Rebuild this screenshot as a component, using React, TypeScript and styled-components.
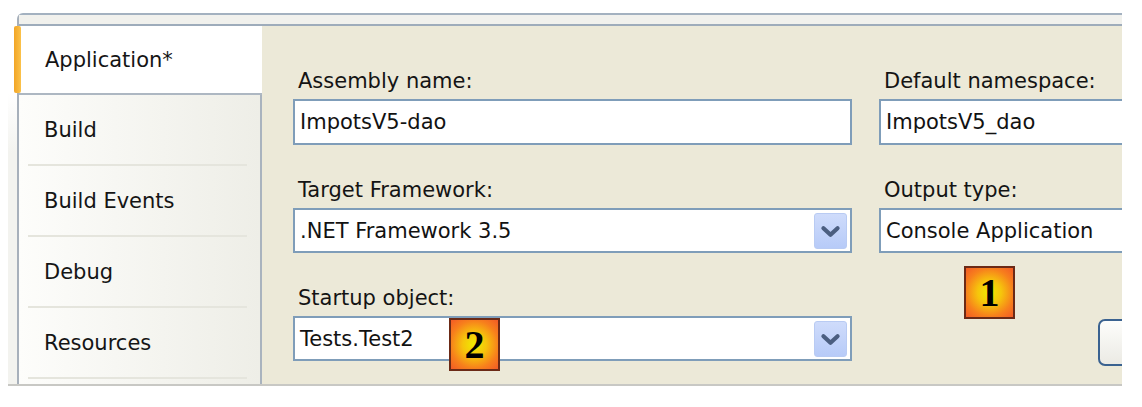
import React from "react";
import styled, { createGlobalStyle } from "styled-components";

const Global = createGlobalStyle`
  html, body { margin: 0; padding: 0; background: #ffffff; }
  body { font-family: "DejaVu Sans", Verdana, sans-serif; color: #111; }
`;

const Page = styled.div`
  position: relative;
  width: 1142px;
  height: 407px;
  overflow: hidden;
  box-sizing: border-box;
  padding: 13px 20px 0 8px;
`;

const Shell = styled.div`
  display: flex;
  height: 373px;
  box-sizing: border-box;
  padding-left: 9px;
  border-bottom: 2px solid #c8c8c4;
  background: linear-gradient(to bottom, #ffffff 0, #ffffff 80px, #f3f3ef 140px);
`;

const Frame = styled.div`
  flex: 1;
  display: flex;
  flex-direction: column;
  border-top: 2px solid #a3b1c0;
  border-left: 2px solid #a7b0bb;
  border-top-left-radius: 6px;
  min-width: 0;
`;

const TopBand = styled.div`
  height: 9px;
  background: #f1f1ed;
  border-bottom: 2px solid #9eacbb;
`;

const Body = styled.div`
  flex: 1;
  display: flex;
  min-height: 0;
`;

const TabColumn = styled.div`
  width: 243px;
  flex: none;
  box-sizing: border-box;
  border-right: 2px solid #a9b3be;
  background: linear-gradient(to right, #fdfdfb, #eeeee7);
  display: flex;
  flex-direction: column;
`;

const Tab = styled.div<{ $selected?: boolean }>`
  position: relative;
  display: flex;
  align-items: center;
  font-size: 21px;
  color: #151515;
  white-space: nowrap;
  ${(p) =>
    p.$selected
      ? `
    height: 67px;
    padding-left: 26px;
    background: #ffffff;
    border-bottom: 2px solid #adb7c2;
    margin-right: -2px;
    &::before {
      content: "";
      position: absolute;
      left: -5px;
      top: 0;
      bottom: 0;
      width: 7px;
      border-radius: 2px;
      background: linear-gradient(to right, #f2a526, #fbc24a);
    }
  `
      : `
    height: 69px;
    padding-left: 25px;
  `}
`;

const Separator = styled.div`
  height: 2px;
  margin: 0 13px 0 9px;
  background: #e5e5dd;
`;

const ContentArea = styled.div`
  flex: 1;
  min-width: 0;
  overflow: hidden;
  background: #ece9d8;
  padding: 43px 0 0 31px;
`;

const FormGrid = styled.div`
  display: grid;
  grid-template-columns: 559px 300px;
  column-gap: 27px;
  row-gap: 33px;
`;

const Field = styled.div`
  display: flex;
  flex-direction: column;
  gap: 6px;
`;

const Label = styled.div`
  font-size: 21px;
  line-height: 24px;
  padding-left: 5px;
  color: #141414;
  white-space: nowrap;
`;

const TextBox = styled.div<{ $h?: number }>`
  height: ${(p) => p.$h ?? 46}px;
  box-sizing: border-box;
  border: 2px solid #7f9db9;
  background: #ffffff;
  display: flex;
  align-items: center;
  padding: 0 3px 0 5px;
  font-size: 21px;
  color: #121212;
  white-space: nowrap;
  overflow: hidden;
`;

const ArrowButton = styled.div`
  margin-left: auto;
  width: 33px;
  height: 36px;
  flex: none;
  box-sizing: border-box;
  border-radius: 3px;
  border: 1px solid #b9cbf3;
  background: linear-gradient(to bottom, #cfdcfb, #b7cbf8);
  display: flex;
  align-items: center;
  justify-content: center;
`;

const ButtonCell = styled.div`
  padding: 33px 0 0 219px;
`;

const PushButton = styled.div`
  width: 200px;
  height: 47px;
  box-sizing: border-box;
  border: 2px solid #3a6290;
  border-radius: 7px;
  background: linear-gradient(to bottom, #fdfdfb, #ebeae4);
`;

const Badge = styled.div<{ $x: number; $y: number }>`
  position: absolute;
  left: ${(p) => p.$x}px;
  top: ${(p) => p.$y}px;
  width: 51px;
  height: 53px;
  box-sizing: border-box;
  border: 2px solid #6b2a16;
  background: radial-gradient(circle at 50% 50%, #eeec00 0%, #f6c40c 35%, #f7801c 70%, #f35a26 100%);
  display: flex;
  align-items: center;
  justify-content: center;
  font-family: "Liberation Serif", "Times New Roman", serif;
  font-weight: bold;
  font-size: 40px;
  line-height: 1;
  color: #000;
`;

const Chevron = () => (
  <svg width="33" height="36" viewBox="0 0 33 36">
    <polyline
      points="9,15 16.5,22 24,15"
      fill="none"
      stroke="#4b5e80"
      strokeWidth="4.5"
      strokeLinecap="round"
      strokeLinejoin="round"
    />
  </svg>
);

const tabs = ["Build", "Build Events", "Debug", "Resources"];

export default function App() {
  return (
    <>
      <Global />
      <Page>
        <Shell>
          <Frame>
            <TopBand />
            <Body>
              <TabColumn>
                <Tab $selected>Application*</Tab>
                {tabs.map((t) => (
                  <React.Fragment key={t}>
                    <Tab>{t}</Tab>
                    <Separator />
                  </React.Fragment>
                ))}
              </TabColumn>
              <ContentArea>
                <FormGrid>
                  <Field>
                    <Label>Assembly name:</Label>
                    <TextBox>ImpotsV5-dao</TextBox>
                  </Field>
                  <Field>
                    <Label>Default namespace:</Label>
                    <TextBox>ImpotsV5_dao</TextBox>
                  </Field>
                  <Field>
                    <Label>Target Framework:</Label>
                    <TextBox $h={45}>
                      .NET Framework 3.5
                      <ArrowButton>
                        <Chevron />
                      </ArrowButton>
                    </TextBox>
                  </Field>
                  <Field>
                    <Label>Output type:</Label>
                    <TextBox $h={45}>Console Application</TextBox>
                  </Field>
                  <Field>
                    <Label>Startup object:</Label>
                    <TextBox $h={45}>
                      Tests.Test2
                      <ArrowButton>
                        <Chevron />
                      </ArrowButton>
                    </TextBox>
                  </Field>
                  <ButtonCell>
                    <PushButton />
                  </ButtonCell>
                </FormGrid>
              </ContentArea>
            </Body>
          </Frame>
        </Shell>
        <Badge $x={964} $y={266}>1</Badge>
        <Badge $x={449} $y={318}>2</Badge>
      </Page>
    </>
  );
}
